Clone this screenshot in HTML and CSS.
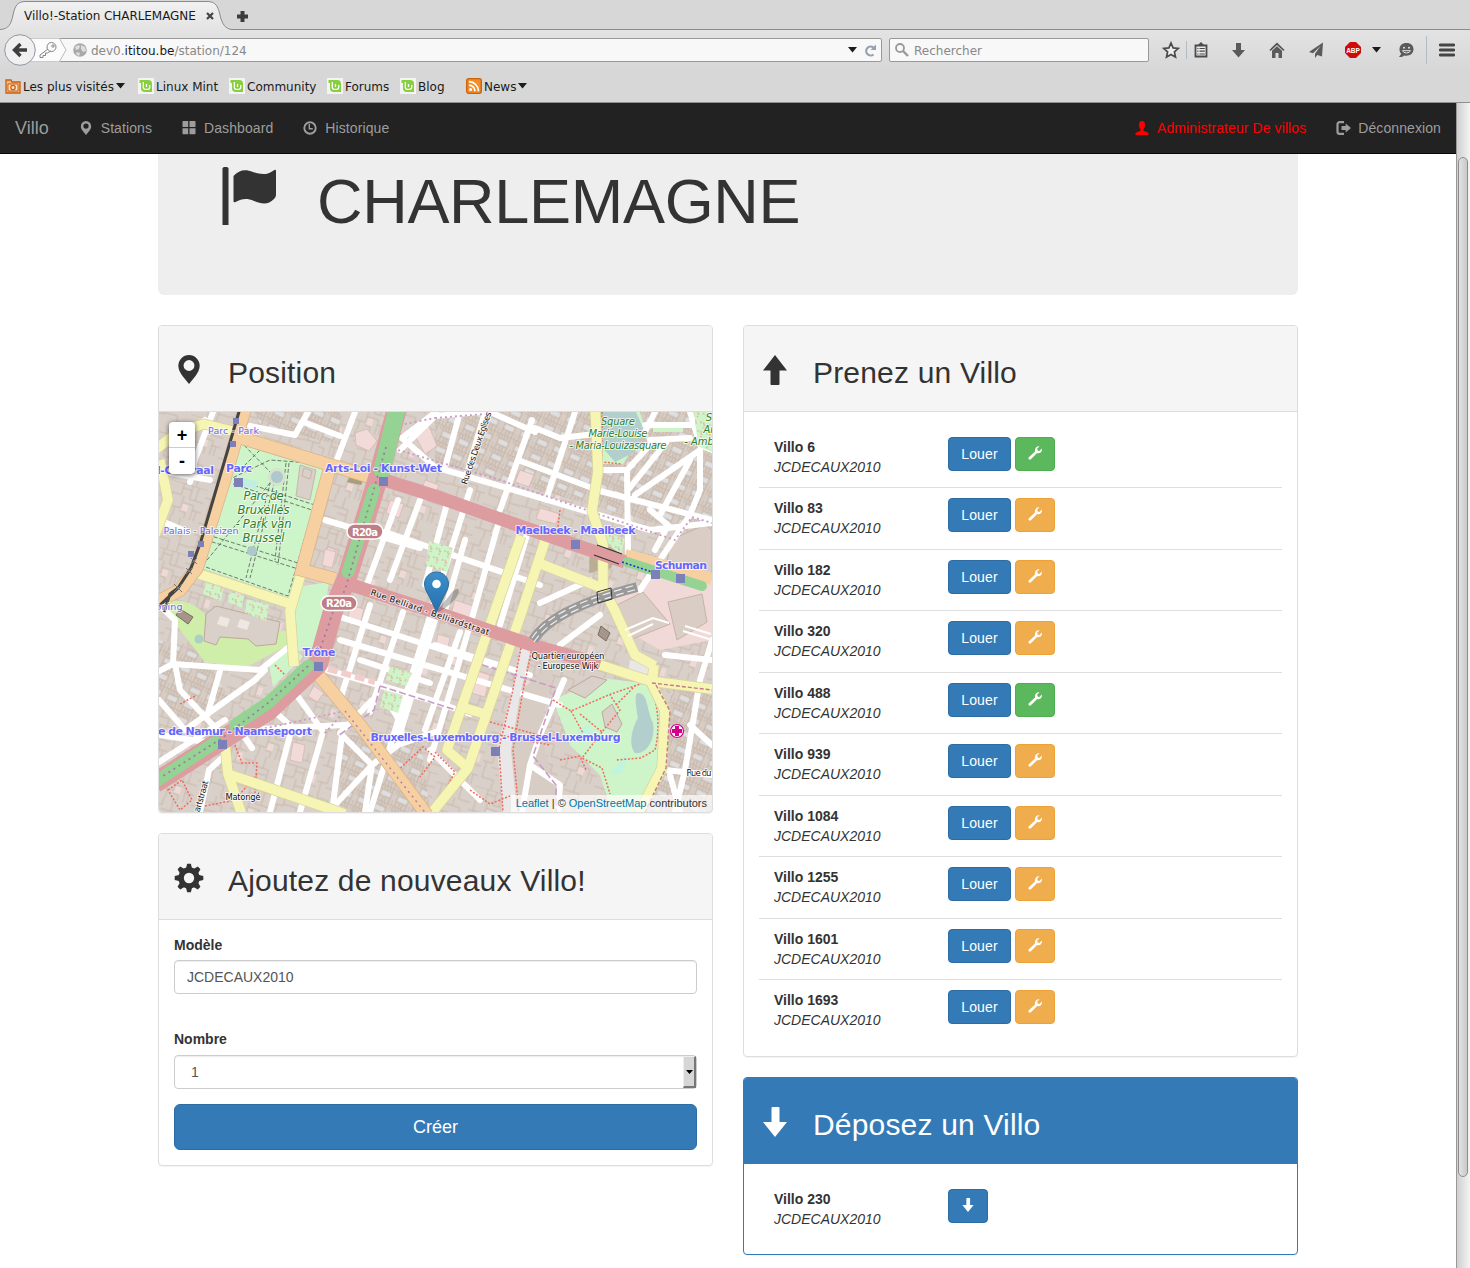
FILE: index.html
```html
<!DOCTYPE html>
<html lang="fr">
<head>
<meta charset="utf-8">
<title>Villo!-Station CHARLEMAGNE</title>
<link rel="stylesheet" href="styles.css">
</head>
<body>
<svg class="defs" width="0" height="0">
  <defs>
    <symbol id="pin" viewBox="0 0 16 16"><path fill-rule="evenodd" d="M8 0a5.900 5.900 0 0 0-5.900 5.900c0 2.200 1.200 4 2.200 5.500L8 16l3.700-4.600c1-1.500 2.200-3.300 2.200-5.500A5.900 5.900 0 0 0 8 0zm0 2.800a3 3 0 0 1 0 6 3 3 0 0 1 0-6z"/></symbol>
    <symbol id="grid" viewBox="0 0 14 14"><path d="M1 0h5.200v6H.5V.5zM7.500 0H13l.5.5V6h-6zM.5 7.300h5.700v6H1l-.5-.5zM7.500 7.300h6v5.500l-.5.5H7.500z"/></symbol>
    <symbol id="clock" viewBox="0 0 14 14"><circle cx="7" cy="7" r="5.700" fill="none" stroke="currentColor" stroke-width="1.900"/><path d="M6.300 3v4.700h3.500" fill="none" stroke="currentColor" stroke-width="1.400"/></symbol>
    <symbol id="user" viewBox="0 0 14 14"><path d="M7 0C4.900 0 4 1.500 4 3.500c0 2 .5 3.500 1.500 4.700v1.500C5 10.500 1 11 .5 12.300V14h13v-1.700C13 11 9 10.500 8.500 9.700V8.200C9.500 7 10 5.500 10 3.500 10 1.500 9.100 0 7 0z"/></symbol>
    <symbol id="logout" viewBox="0 0 15 14"><path d="M8 1.200H3.600A2.100 2.100 0 0 0 1.500 3.300v7.400a2.100 2.100 0 0 0 2.100 2.100H8" fill="none" stroke="currentColor" stroke-width="2.200"/><path d="M5.500 5h4.200V2.600L15 7l-5.300 4.400V9H5.500z"/></symbol>
    <symbol id="flag" viewBox="0 0 56 60"><path d="M.5 1L2 0h3L6.500 1v57h-6zM11.500 9C17 3 23 1.500 31 5c8 3 15 3 20.500-1.500q2.500-1.500 2.500.5v24q0 2-2 4c-6 6-12 5-20 2-7-3-12-2.500-18.500 1q-2 1-2-1z"/></symbol>
    <symbol id="up" viewBox="0 0 24 30"><path d="M12 0L24 15.500h-7.500V29q0 1-1 1h-7q-1 0-1-1V15.500H0z"/></symbol>
    <symbol id="down" viewBox="0 0 24 30"><path d="M12 30L24 15h-7.500V1q0-1-1-1h-6q-1 0-1 1v14H0z"/></symbol>
    <symbol id="gear" viewBox="-15 -15 30 30"><path id="tooth" d="M-3.200-9L-1.900-14.300H1.900L3.200-9V9L1.900 14.300H-1.900L-3.200 9z"/><use href="#tooth" transform="rotate(45)"/><use href="#tooth" transform="rotate(90)"/><use href="#tooth" transform="rotate(135)"/><circle r="10.700"/><circle r="5.200" fill="#f5f5f5"/></symbol>
    <symbol id="wrench" viewBox="0 0 14 14"><path d="M11.600.3L9.200 2.600l.4 1.900 1.900.4L13.700 2.600c.6 2-.3 3.500-1.500 4.200-.9.500-2 .5-3 .2l-6.300 6.300c-.6.6-1.400.6-2 0s-.6-1.400 0-2L7 5.600C6.500 2.700 8.500-.3 11.600.3z"/></symbol>
    <symbol id="mint" viewBox="0 0 16 16"><rect width="16" height="16" fill="#f4f4f4"/><path d="M1.500 2H10c3 0 4 1.500 4 4v8H7c-3 0-4-1.500-4-4V5H1.500z" fill="#87cf3e"/><path d="M5.300 4v5.500q0 1.800 1.800 1.800h2.800q1.800 0 1.800-1.800V7M8.500 6v3" fill="none" stroke="#fff" stroke-width="1.300"/></symbol>
    <symbol id="caret" viewBox="0 0 9 6"><path d="M0 0h9L4.500 5.500z"/></symbol>
  </defs>
</svg>

<header class="browser">
  <div class="tabs">
    <svg class="tab-shape" width="240" height="30" viewBox="0 0 240 30"><defs><linearGradient id="tg" x2="0" y2="1"><stop stop-color="#f1f1f1"/><stop offset="1" stop-color="#e3e3e3"/></linearGradient></defs><path d="M0 29.500C9 29 11 24 13 15S17 1.500 26 1.500H207c9 0 11 5 13 13.500s5 14 12 14.500h8V31H0z" fill="url(#tg)"/><path d="M0 29.500C9 29 11 24 13 15S17 1.500 26 1.500H207c9 0 11 5 13 13.500s5 14 12 14.500h8" fill="none" stroke="#8b8b8b"/></svg>
    <span class="tab-title">Villo!-Station CHARLEMAGNE</span>
    <svg class="tab-close" width="8" height="8" viewBox="0 0 8 8"><path d="M1 1l6 6M7 1L1 7" stroke="#444" stroke-width="2.200"/></svg>
    <svg class="tab-new" width="11" height="11" viewBox="0 0 11 11"><path d="M5.500 0v11M0 5.500h11" stroke="#3c3c3c" stroke-width="4"/></svg>
  </div>
  <div class="toolbar">
    <div class="url">
      <svg class="back" width="66" height="34" viewBox="0 0 66 34"><path d="M20 5.500H56L62.500 17 56 28.500H20z" fill="#fcfcfc"/><path d="M55.500 5.500L62 17l-6.500 11.500" fill="none" stroke="#bbb"/><circle cx="16" cy="17" r="15.300" fill="#f0f0f0" stroke="#8f98a3"/><path d="M16.500 11l-6 6 6 6M11 17h12" fill="none" stroke="#3e3e3e" stroke-width="3.400"/><g fill="none" stroke="#858585"><circle cx="47.500" cy="14" r="4.500"/><circle cx="49" cy="13" r="1.200"/><path d="M44 16l-8 6v2.500h3v-2h2.500v-2.500h2l3-2"/></g></svg>
      <svg width="14" height="14" viewBox="0 0 14 14"><circle cx="7" cy="7" r="6.800" fill="#a9a9a9"/><path d="M2 4l3-2 2 1-1 3-3 1zM8 2l4 2 1 4-3 1-2-3zM4 9l3 1-1 3-3-2z" fill="#dedede"/></svg>
      <span class="address">dev0.<b>ititou.be</b>/station/124</span>
      <svg class="ink" width="9" height="6"><use href="#caret"/></svg>
      <svg class="reload" width="13" height="13" viewBox="0 0 13 13"><path d="M9.500 10.500A4.500 4.500 0 1 1 9.500 3.500" fill="none" stroke="#95a1af" stroke-width="2.200"/><path d="M6.500 6H12V.5z" fill="#95a1af"/></svg>
    </div>
    <div class="search">
      <svg width="14" height="14" viewBox="0 0 14 14"><g fill="none" stroke="#999" stroke-width="1.800"><circle cx="5" cy="5" r="4"/><path d="M8 8l5 5" stroke-width="2.400"/></g></svg>
      <span>Rechercher</span>
    </div>
    <div class="tools">
      <svg width="18" height="18" viewBox="0 0 18 18"><path d="M9 2l2.100 4.900 5.200.5-3.900 3.500 1.100 5.200L9 13.400l-4.500 2.700 1.100-5.200-3.900-3.500 5.200-.5z" fill="#eee" stroke="#4a4a4a" stroke-width="1.700"/></svg>
      <i class="sep short"></i>
      <svg width="14" height="16" viewBox="0 0 14 16"><path d="M1.500 3.500h11v11h-11z" fill="#e8e8e8" stroke="#4a4a4a" stroke-width="1.800"/><path d="M4 3l3-3 3 3v1H4z" fill="#4a4a4a"/><path d="M3.300 6.500h1.200M5.500 6.500h5.300M3.300 9.200h1.200M5.500 9.200h5.300M3.300 12h1.200M5.500 12h5.300" stroke="#4a4a4a" stroke-width="1.200"/></svg>
      <svg width="13" height="15" viewBox="0 0 13 15"><path d="M4 0h5v7h4l-6.500 7.500L0 7h4z" fill="#5a5a5a"/></svg>
      <svg width="16" height="16" viewBox="0 0 16 16"><path d="M1 8.500L8 1.800l7 6.700" fill="none" stroke="#555" stroke-width="1.700"/><path d="M3 8.800l5-4.500 5 4.500V16H9.500v-5h-3v5H3z" fill="#5a5a5a"/></svg>
      <svg width="16" height="16" viewBox="0 0 16 16"><path d="M15 .5L1 10l4 1.300L12.500 4 7 11.800V16l2.300-3 4.700 1.500z" fill="#5a5a5a"/></svg>
      <svg width="16" height="16" viewBox="0 0 16 16"><path d="M5 0h6l5 5v6l-5 5H5l-5-5V5z" fill="#d00a0a"/><text x="8" y="10.800" class="abp">ABP</text></svg>
      <svg class="ink" width="9" height="6"><use href="#caret"/></svg>
      <svg width="16" height="16" viewBox="0 0 16 16"><path d="M8.500 1C4 1 1.500 3.600 1.500 7.200c0 2 .8 3.500 1.800 4.600L1 15c2 .3 4-.4 5-1.500 5.500 1 9.500-2 9.500-6.300C15.500 3.600 13 1 8.500 1z" fill="#5a5a5a"/><circle cx="6" cy="5.800" r="1" fill="#e5e5e5"/><circle cx="11" cy="5.800" r="1" fill="#e5e5e5"/><path d="M4.500 8.700h8q-1 2.300-4 2.300t-4-2.300z" fill="none" stroke="#e5e5e5"/></svg>
      <i class="sep"></i>
      <svg width="16" height="14" viewBox="0 0 16 14"><path d="M1.200 2h13.600M1.200 7h13.600M1.200 12h13.600" stroke="#444" stroke-width="2.800" stroke-linecap="round"/></svg>
    </div>
  </div>
  <div class="bookmarks">
    <span class="bm first"><svg width="16" height="16" viewBox="0 0 16 16"><path d="M1 2h5l1 2h8v11H1z" fill="#f3b87c" stroke="#cb5f10" stroke-width="1.300"/><path d="M3 6h10v7H3z" fill="#fbe3c5" stroke="#cb5f10"/><circle cx="8" cy="9.500" r="2.200" fill="none" stroke="#cb5f10" stroke-width="1.300"/></svg><span>Les plus visités</span><svg class="ink" width="9" height="6"><use href="#caret"/></svg></span>
    <span class="bm b2"><svg width="16" height="16"><use href="#mint"/></svg><span>Linux Mint</span></span>
    <span class="bm b3"><svg width="16" height="16"><use href="#mint"/></svg><span>Community</span></span>
    <span class="bm b4"><svg width="16" height="16"><use href="#mint"/></svg><span>Forums</span></span>
    <span class="bm b5"><svg width="16" height="16"><use href="#mint"/></svg><span>Blog</span></span>
    <span class="bm b6"><svg width="16" height="16" viewBox="0 0 16 16"><rect x=".7" y=".7" width="14.600" height="14.600" rx="2" fill="#f28c28" stroke="#c9600b" stroke-width="1.300"/><circle cx="4.600" cy="11.600" r="1.500" fill="#fff"/><path d="M3 7.200a6 6 0 0 1 6 6M3 3.700a9.500 9.500 0 0 1 9.500 9.500" fill="none" stroke="#fff" stroke-width="1.700"/></svg><span>News</span><svg class="ink" width="9" height="6"><use href="#caret"/></svg></span>
  </div>
</header>

<div class="viewport">
  <div class="page">
    <nav class="navbar">
      <a class="brand">Villo</a>
      <a class="nav n1"><svg width="14" height="14"><use href="#pin"/></svg>Stations</a>
      <a class="nav"><svg width="14" height="14"><use href="#grid"/></svg>Dashboard</a>
      <a class="nav"><svg width="14" height="14"><use href="#clock"/></svg>Historique</a>
      <a class="nav admin"><svg width="14" height="14"><use href="#user"/></svg>Administrateur De villos</a>
      <a class="nav"><svg width="15" height="14"><use href="#logout"/></svg>Déconnexion</a>
    </nav>
    <main class="container">
      <section class="jumbotron">
        <svg width="56" height="60"><use href="#flag"/></svg>
        <h1>CHARLEMAGNE</h1>
      </section>
      <div class="columns">
        <div class="col">
          <section class="panel">
            <h2><svg width="30" height="29"><use href="#pin"/></svg><span>Position</span></h2>
            <div class="map">
              <svg width="553" height="400" viewBox="159 412 553 400">
                <defs>
                  <pattern id="bld" width="76" height="68" patternUnits="userSpaceOnUse" patternTransform="rotate(17)">
                    <rect width="76" height="68" fill="#d9d0c9"/>
                    <path id="cells" d="M0 0h38M0 12h14v-12M14 5h9v9h15M23 0v5M29 14v-14M5 12v13h12v-13M11 25v9M17 19h12v15M29 24h9M0 25h5M33 24v10M17 28h6v6" fill="none" stroke="#c6b3a6" stroke-width=".8"/>
                    <use href="#cells" x="38" y="34"/><path d="M38 8h12v-8M50 6h14v12h12M44 8v18h16v-8M60 26h8v8M0 42h10v-8M10 46h16v14h12M4 42v16h12v10M26 60v8M20 34v12M16 52h10" fill="none" stroke="#c6b3a6" stroke-width=".8"/>
                    <path d="M18 20h6v7h-6zM68 37h5v8h-5z" fill="#eed9d6"/>
                  </pattern>
                  <pattern id="dense" width="18" height="16" patternUnits="userSpaceOnUse" patternTransform="rotate(24)">
                    <rect width="18" height="16" fill="#d7cdc5"/><rect x="4" y="5" width="11" height="6" fill="#dededf"/>
                    <path d="M0 0v5M3 0v5M6 0v4M9 0v5M12 0v4M15 0v5M0 11v5M4 11v5M8 12v4M11 11v5M15 11v5M0 0h18M4 5h11v6H4z" fill="none" stroke="#bfaa9b" stroke-width=".8"/>
                  </pattern>
                  <pattern id="garden" width="9" height="9" patternUnits="userSpaceOnUse" patternTransform="rotate(17)"><rect width="9" height="9" fill="#cdf5c9"/><path d="M1 1h5v5" fill="none" stroke="#f28478" stroke-width="1.200" stroke-dasharray="1.500 1.500"/></pattern>
                </defs>
                <rect x="159" y="412" width="553" height="400" fill="url(#bld)"/>
                <path d="M435 412H712V535L650 522 560 496 435 462z" fill="url(#dense)"/>
                <path d="M340 735H420L430 812H330zM255 412H340V445L260 425zM159 640L200 650 230 700 190 730 159 700zM672 690H712V812H650z" fill="url(#dense)"/>
                <path d="M510 700L555 660 540 730 560 812H500z" fill="#d7cdc5"/>
                <path d="M605 590L640 585 712 535V640L660 650 625 630z" fill="#f0d9d7"/>
                <path d="M670 540l35-15 7 5v45l-45-12zM615 606l28-14 27 32-40 16zM668 602l34-8 5 28-30 18z" fill="#d9cdc5" stroke="#c6b3a6"/>
                <g fill="#f2dad9" stroke="#d3b5ac" stroke-width=".7"><path d="M355 433l12-4 10 12-8 10-13-6zM413 432l16-6 8 20-12 8zM390 500l14 4-5 14-13-5zM325 549l11 3-4 16-10-3zM350 605l14 4-4 15-12-4zM425 480l14 5-5 12-13-5zM455 600l18 6-5 17-18-6zM520 470l14 5-5 12-14-5zM474 670l16 5-5 22-17-5zM293 742l12 3-3 18-12-3zM540 508l20 6-4 10-20-5zM438 634l12 4-3 14-12-4zM314 686l10 7-7 9-9-6z"/></g>
                <path d="M160 604C180 596 200 604 208 620L290 632 286 646 245 668 205 662 180 630z" fill="#cfeea9"/>
                <path d="M206 614l10-8 64 16-4 22-20 2-8-7-28-2-4 8-12-4z" fill="#d9d0c9" stroke="#bfa898"/><path d="M220 616l10 3-3 8-10-3zM240 619l10 3-3 8-10-3z" fill="#efe7e0"/>
                <circle cx="199" cy="639" r="4.500" fill="#acd0c4"/>
                <path d="M239 440L327 467 290 598 198 567z" fill="#cdf5c9"/>
                <path d="M291 588l38-6-10 65-30 6zM268 660l23-15 12 12-30 30z" fill="#cdf5c9"/>
                <g fill="none" stroke="#666" stroke-width=".9" stroke-dasharray="4 2"><path d="M240 441L325 467 288 596 200 565zM237 480L318 506M233 484L315 511M208 535L298 563M206 540L295 568M289 463L278 565M286 463L275 560M272 476L246 578M276 476L250 578M274 478L203 565M240 441L274 476M240 470l22-22-16-4M228 480L270 460 310 463"/></g>
                <path d="M300 465l16 5-6 30-14-4zM304 468l8 3-2 8-8-3z" fill="#d9d0c9" stroke="#bfa898" stroke-width=".7"/>
                <circle cx="277" cy="477" r="9" fill="#d4e2cf"/><circle cx="277" cy="477" r="6" fill="#aec8cb"/><circle cx="252" cy="551" r="5" fill="#aec8cb"/><path d="M243 478l15 4-2 7-14-3z" fill="#bfeee3"/>
                <path d="M206 583l18 4-3 14-18-7zM229 592l15 4-2 12-14-6zM247 599l22 6-3 16-21-8z" fill="url(#garden)"/>
                <path d="M600 412h40l5 18-22 34h-20z" fill="#cdf5c9"/><path d="M601 412h35l8 18-9 22-20 10-14-16z" fill="#b2cfcd"/><path d="M602 412v50l20 2" fill="none" stroke="#ef6d60" stroke-width="1.500" stroke-dasharray="2 1.500"/>
                <path d="M553 700L602 678 650 684 663 712 658 770 640 812H612L600 775 570 745z" fill="#cdf5c9"/>
                <path d="M638 693c10 0 8 15 15 30 3 20-9 32-18 30-7-8-3-25 3-35-2-12-4-25 0-25z" fill="#b2cfcd"/><path d="M628 752l-6 22-12 0zM577 730l10-4 7 6-10 8z" fill="#bff4df"/>
                <path d="M602 712l10-8 10 20-5 8-12-5zM568 690l24-14 15 4-22 18z" fill="#d9d0c9" stroke="#bfa898"/>
                <path d="M590 552l12-8 16 6-7 18-22 5z" fill="#aca17f" opacity=".7"/><path d="M351 475l14 2-4 8-14-3z" fill="#a99d7e"/>
                <g fill="none" stroke="#fff" stroke-linecap="round" stroke-linejoin="round" stroke-width="6">
                  <path d="M159 446L205 420M213 412L195 460 190 482M159 471L210 480M159 520L188 532M355 412L333 470M306 423L340 436M308 412L295 435 250 426"/>
                  <path d="M436 412L402 438M402 438L435 467 650 530 712 523M400 450L435 416M435 416L490 411M460 412L446 464M485 412L465 480M470 490L435 600 370 812M532 420L500 510M575 412L546 500M535 428L560 438 595 434M490 412L535 432M518 460L600 491 712 520M690 412L700 445 712 450M700 450L700 490 690 515 640 590M635 495L700 450M603 470L627 470 628 553M628 490L668 440M645 425L690 425M650 440L690 438M650 510L668 525 655 550M627 470L650 445M655 412L645 432M690 460L660 515"/>
                  <path d="M325 520L420 548M385 532L540 585M420 500L390 580M398 500L365 590M448 500L425 585M465 540L445 610M498 525L470 625M527 535L500 625"/>
                  <path d="M370 605L340 700M403 612L370 712M435 620L398 740M460 632L425 730M340 617L490 665M435 645L530 675M360 660L430 683M320 668L430 700 470 714M390 705L402 725 400 742"/>
                  <path d="M340 640L560 705M470 625L430 760"/>
                  <path d="M159 671L173 664 175 620 159 605M173 664L260 670 290 646M220 671L207 716M175 664L180 690 222 735M159 700L185 730 255 680 265 670M159 762L225 720M293 690L322 730M345 725L240 730 252 748M275 712L300 734M290 735L270 812M322 735L300 812M342 735L332 812M342 735L372 765 365 812M372 765L398 745 435 732M372 765L335 805M200 812L209 770 224 756M340 733L372 700"/>
                  <path d="M564 680L540 735 530 765 522 812M530 765L560 785 558 812M430 750L480 800M600 615L560 645M712 660L665 655M712 640L700 680 685 770 675 812M690 725L712 745M665 770L712 775M670 775L680 812M540 603L590 580M159 735L225 745"/>
                </g>
                <path d="M653 428h30v4h-30z" fill="#cdf5c9"/>
                <path d="M429 541l24 7-6 24-21-6zM390 666l22 7-6 13-20-6zM384 690l19 6-5 17-18-6zM604 532l21 7-4 15-12-8zM694 412h18v40l-14-6z" fill="url(#garden)"/>
                <path d="M522 645l10 0-12 50-9 55 6 62h-14l-6-64 14-52z" fill="#e9e7e8"/>
                <path d="M630 660l22 5-4 14-20-6z" fill="#e9e7e8"/>
                <g fill="none" stroke="#f26a5c" stroke-width="1.500" stroke-dasharray="2 1.700"><path d="M553 700l18 11 40-17 35-12M580 714l22 18 18-22-10-15M655 700q6 25 0 50l-14 8-25 2M602 732l-20 26 20 10 8 26M616 705l20-20M571 711l12 22M521 648l-9 46-13 54 4 64M532 648l-10 48-9 54 6 62M490 722l60 16M500 735l50 10M232 738l10 25 15 0-2 30M168 790l14-10 10 20-12 10zM205 806l30-6 22-26M395 773l28-26 12 10-15 20M435 752l20 20-12 22M560 760l20-4 6 14M470 790l20 14 20-8M180 704l15-8M560 510l-3 24M275 665l10 10"/></g>
                <g fill="none" stroke="#c99bc9" stroke-width="1.800" stroke-dasharray="2 3"><path d="M398 450L500 480 595 513 675 540 692 517 712 523M435 418L485 414M345 711L225 737M325 733L345 711M398 440L400 425 435 418"/></g>
                <g fill="none" stroke="#c99bc9" stroke-width="1.600" stroke-dasharray="7 3"><path d="M380 686L459 711 476 663 556 688 533 756 556 785 556 812M380 686L374 710 338 736"/></g>
                <g fill="none" stroke-linejoin="round" stroke="#d8d59b" stroke-width="11"><path d="M595 405L598 471 592 511 603 544 603 588 615 611 635 655 655 666"/><path d="M521 536L490 625 447 750 468 768M545 541L522 611 468 768 430 815M541 564L602 588M465 708L488 715"/><path d="M196 573L291 604M301 574L290 611 294 666M225 744L228 774 243 818M228 774L345 814"/><path d="M600 665L650 681 712 689M654 665L652 684 665 711 662 768 638 815M155 450L178 432 204 424 232 431M160 460L168 500 155 535"/></g>
                <g fill="none" stroke-linejoin="round" stroke="#f6f5b4" stroke-width="9.500"><path d="M595 405L598 471 592 511 603 544 603 588 615 611 635 655 655 666"/><path d="M521 536L490 625 447 750 468 768M545 541L522 611 468 768 430 815M541 564L602 588M465 708L488 715"/><path d="M196 573L291 604M301 574L290 611 294 666M225 744L228 774 243 818M228 774L345 814"/><path d="M600 665L650 681 712 689M654 665L652 684 665 711 662 768 638 815M155 450L178 432 204 424 232 431M160 460L168 500 155 535"/></g>
                <path d="M656 685L670 711 666 768 645 812M652 683L712 690" fill="none" stroke="#c5798b" stroke-width="1.400" stroke-dasharray="4 2"/>
                <g fill="none" stroke="#d9b489" stroke-width="13.500"><path d="M246 405L223 485 197 568 180 590 155 603M238 437L370 477M329 471L302 570 335 579M316 672L360 725 427 815"/></g>
                <g fill="none" stroke="#f7d0a2" stroke-width="12"><path d="M246 405L223 485 197 568 180 590 155 603M238 437L370 477M329 471L302 570 335 579M316 672L360 725 427 815M625 555L712 579"/></g>
                <path d="M345 711L427 815" fill="none" stroke="#b27fae" stroke-width="1.500" stroke-dasharray="2 4"/>
                <g fill="none" stroke="#dd9c9f" stroke-linejoin="round"><path d="M398 405L378 478 347 578 333 611 318 664 268 711 225 738 155 783" stroke-width="20"/><path d="M378 478L435 496 520 526 625 562M336 580L435 612 535 646 600 664" stroke-width="13"/></g>
                <g fill="none" stroke="#95d395" stroke-linecap="round"><path d="M398 405L382 470" stroke-width="17"/><path d="M374 490L348 572M308 666L268 703 235 725M216 742L155 782" stroke-width="12.500"/><path d="M627 562L702 586" stroke-width="10"/></g>
                <path d="M386 447L345 590 333 612 318 655M308 666L268 703 222 738 160 778" fill="none" stroke="#a573a8" stroke-width="1.700" stroke-dasharray="2 4"/>
                <path d="M622 562L655 573" stroke="#2038c0" stroke-width="1.600" stroke-dasharray="2 2"/><path d="M597 545l25 9M594 555l25 9" stroke="#333" stroke-width="1.200"/>
                <path d="M328 669L375 682" stroke="#f2cdcb" stroke-width="6" stroke-dasharray="10 4"/>
                <g fill="none"><path d="M533 640C545 622 570 605 637 587" stroke="#999" stroke-width="10"/><path d="M533 640C545 622 570 605 637 587" stroke="#eee" stroke-width="1.200" stroke-dasharray="8 4" transform="translate(1 2)"/><path d="M533 640C545 622 570 605 637 587" stroke="#eee" stroke-width="1.200" stroke-dasharray="8 4" transform="translate(-1 -2)"/><path d="M597 592l14-4 1 11-14 4z" stroke="#333"/></g>
                <path d="M241 405L201 541 191 568 178 588 155 610M178 588l-8 6-6 18" fill="none" stroke="#444" stroke-width="3"/><path d="M191 558l6 6m0-6l-6 6M186 568l6 6m0-6l-6 6M174 584l8 8m0-8l-8 8" stroke="#777"/>
                <path d="M180 609l13 8-5 7-12-9zM601 626l9 7-4 8-8-6z" fill="#a5958a" stroke="#7a6a60"/>
                <path d="M625 630l28-12 16 5M628 636l25-12M685 626l26 8M683 631l26 8" fill="none" stroke="#fff" stroke-width="2"/>
                <g fill="#7b80b8"><path d="M233 418h6v6h-6zM230 441h6v6h-6zM234 478h9v9h-9zM198 541h6v6h-6zM188 551h6v6h-6zM379 477h9v9h-9zM571 540h9v9h-9zM651 570h9v9h-9zM676 574h9v9h-9zM314 662h9v9h-9zM218 740h9v9h-9zM491 747h9v9h-9z"/></g>
                <circle cx="677" cy="731" r="6.500" fill="#fff" stroke="#d5008c" stroke-width="1.200"/><path d="M677 726v10M672 731h10" stroke="#d5008c" stroke-width="4"/>
                <g class="rail"><text x="233.500" y="434" textLength="51">Parc - Park</text><text x="201" y="534" textLength="75">Palais - Paleizen</text><text x="169" y="610" textLength="27">oning</text></g>
                <g class="metro"><text x="185.500" y="474" textLength="57">l-Centraal</text><text x="239" y="472" textLength="26">Parc</text><text x="383.500" y="472" textLength="117">Arts-Loi - Kunst-Wet</text><text x="575.500" y="534" textLength="120">Maelbeek - Maalbeek</text><text x="681" y="569" textLength="52">Schuman</text><text x="319" y="656" textLength="33">Trône</text><text x="235" y="735" textLength="154">e de Namur - Naamsepoort</text><text x="495.500" y="741" textLength="250">Bruxelles-Luxembourg - Brussel-Luxemburg</text></g>
                <g class="park"><text x="263.500" y="500" textLength="40">Parc de</text><text x="263.500" y="514" textLength="52">Bruxelles</text><text x="263.500" y="528" textLength="56">- Park van</text><text x="263.500" y="542" textLength="42">Brussel</text></g>
                <g class="park small"><text x="618" y="425" textLength="34">Square</text><text x="618" y="437" textLength="59">Marie-Louise</text><text x="618" y="449" textLength="97">- Maria-Louizasquare</text><text x="709" y="421">S</text><text x="709" y="433">Ar</text><text x="699" y="445">- Amb</text></g>
                <g class="street"><text transform="translate(479 449) rotate(-71)" textLength="76">Rue des Deux Eglises</text><text transform="translate(429 615) rotate(19)" textLength="125">Rue Belliard - Belliardstraat</text><text x="568" y="659" textLength="73">Quartier européen</text><text x="568" y="669" textLength="61">- Europese Wijk</text><text x="243" y="800" textLength="35">Matongé</text><text x="699" y="776" textLength="25">Rue du</text><text transform="translate(204 797) rotate(-74)" textLength="32">artstraat</text></g>
                <g class="ref"><rect x="347" y="524" width="36" height="15" rx="7.500"/><text x="365" y="536" textLength="26">R20a</text><rect x="321" y="596" width="36" height="14.500" rx="7.500"/><text x="339" y="607" textLength="26">R20a</text></g>
                <path d="M437 611l16-20q8-6 5 4-4 8-19 17z" opacity=".3"/>
                <linearGradient id="mk" x2="0" y2="1"><stop stop-color="#3e8fc9"/><stop offset="1" stop-color="#2370ad"/></linearGradient>
                <path d="M436.500 572c-7 0-12 5.500-12 12 0 5 3 9 5 13l7 15 7-15c2-4 5-8 5-13 0-6.500-5-12-12-12z" fill="url(#mk)" stroke="#2b6ea3"/><circle cx="436.500" cy="584" r="4.300" fill="#fff"/>
              </svg>
              <div class="zoom"><span>+</span><span>-</span></div>
              <div class="credit"><a>Leaflet</a> | © <a>OpenStreetMap</a> contributors</div>
            </div>
          </section>
          <section class="panel">
            <h2><svg width="30" height="30" class="gear"><use href="#gear"/></svg><span>Ajoutez de nouveaux Villo!</span></h2>
            <form class="form">
              <label>Modèle</label>
              <div class="field">JCDECAUX2010</div>
              <label class="second">Nombre</label>
              <div class="field select"><span>1</span><i><svg width="7" height="4" viewBox="0 0 9 6" preserveAspectRatio="none"><path d="M0 0h9L4.500 6z"/></svg></i></div>
              <button type="button" class="create">Créer</button>
            </form>
          </section>
        </div>
        <div class="col">
          <section class="panel">
            <h2><svg width="24" height="30" class="arrow"><use href="#up"/></svg><span>Prenez un Villo</span></h2>
            <ul class="rows">
              <li><p><b>Villo 6</b><em>JCDECAUX2010</em></p><a class="btn">Louer</a><a class="btn ok"><svg width="14" height="14"><use href="#wrench"/></svg></a></li>
              <li><p><b>Villo 83</b><em>JCDECAUX2010</em></p><a class="btn">Louer</a><a class="btn warn"><svg width="14" height="14"><use href="#wrench"/></svg></a></li>
              <li><p><b>Villo 182</b><em>JCDECAUX2010</em></p><a class="btn">Louer</a><a class="btn warn"><svg width="14" height="14"><use href="#wrench"/></svg></a></li>
              <li><p><b>Villo 320</b><em>JCDECAUX2010</em></p><a class="btn">Louer</a><a class="btn warn"><svg width="14" height="14"><use href="#wrench"/></svg></a></li>
              <li><p><b>Villo 488</b><em>JCDECAUX2010</em></p><a class="btn">Louer</a><a class="btn ok"><svg width="14" height="14"><use href="#wrench"/></svg></a></li>
              <li><p><b>Villo 939</b><em>JCDECAUX2010</em></p><a class="btn">Louer</a><a class="btn warn"><svg width="14" height="14"><use href="#wrench"/></svg></a></li>
              <li><p><b>Villo 1084</b><em>JCDECAUX2010</em></p><a class="btn">Louer</a><a class="btn warn"><svg width="14" height="14"><use href="#wrench"/></svg></a></li>
              <li><p><b>Villo 1255</b><em>JCDECAUX2010</em></p><a class="btn">Louer</a><a class="btn warn"><svg width="14" height="14"><use href="#wrench"/></svg></a></li>
              <li><p><b>Villo 1601</b><em>JCDECAUX2010</em></p><a class="btn">Louer</a><a class="btn warn"><svg width="14" height="14"><use href="#wrench"/></svg></a></li>
              <li><p><b>Villo 1693</b><em>JCDECAUX2010</em></p><a class="btn">Louer</a><a class="btn warn"><svg width="14" height="14"><use href="#wrench"/></svg></a></li>
            </ul>
          </section>
          <section class="panel primary">
            <h2><svg width="24" height="30" class="arrow"><use href="#down"/></svg><span>Déposez un Villo</span></h2>
            <ul class="rows">
              <li><p><b>Villo 230</b><em>JCDECAUX2010</em></p><a class="btn drop"><svg width="14" height="14"><use href="#down"/></svg></a></li>
            </ul>
          </section>
        </div>
      </div>
    </main>
  </div>
  <div class="scrollbar"><div class="thumb"></div></div>
</div>
</body>
</html>
```

FILE: styles.css
```css
* { box-sizing: border-box; }
body { margin: 0; height: 1268px; overflow: hidden; display: flex; flex-direction: column; background: #fff; color: #333; font: 14px/20px "Liberation Sans", Arial, sans-serif; }
svg { fill: currentColor; flex: none; display: block; }
.defs { position: absolute; }
.ink { color: #1c1c1c; }

/* Browser chrome */
.browser { height: 103px; flex: none; display: flex; flex-direction: column; background: #d7d7d7; border-bottom: 1px solid #8f8f8f; color: #1a1a1a; font: 12px/16px "DejaVu Sans", sans-serif; }
.tabs { height: 30px; display: flex; align-items: center; border-bottom: 1px solid #8b8b8b; position: relative; }
.tab-shape { position: absolute; left: 0; top: 0; }
.tab-title { position: relative; margin-left: 24px; width: 172px; white-space: nowrap; padding-top: 2px; letter-spacing: -.06px; }
.tab-close { position: relative; margin: 3px 0 0 10px; }
.tab-new { margin: 3px 0 0 23px; }
.toolbar { height: 40px; display: flex; align-items: center; background: linear-gradient(#e3e3e3, #d7d7d7); }
.url { margin-left: 20px; width: 862px; height: 24px; border: 1px solid #999; border-radius: 2px; background: #f8f8f8; display: flex; align-items: center; color: #888; }
.back { margin: 0 3px 0 -17px; }
.address { flex: 1; padding: 1px 0 0 4px; }
.address b { font-weight: normal; color: #1a1a1a; }
.url > .ink { margin-right: -2px; }
.reload { margin: 0 4px 0 9px; }
.search { margin-left: 7px; width: 260px; height: 24px; border: 1px solid #999; border-radius: 2px; background: #f8f8f8; display: flex; align-items: center; gap: 5px; padding-left: 5px; color: #888; }
.search span { padding-top: 1px; }
.tools { margin-left: 6px; display: grid; grid-template-columns: 31px 1px 28px 47px 30px 47px 28px 19px 39px 2px 40px; align-items: center; justify-items: center; }
.sep { width: 1px; height: 28px; background: #b4bbc3; }
.sep.short { height: 18px; }
.abp { font: bold 6.5px "Liberation Sans", sans-serif; fill: #fff; text-anchor: middle; }
.bookmarks { display: flex; align-items: center; height: 32px; }
.bm { display: flex; align-items: center; gap: 2px; white-space: nowrap; flex: none; }
.bm span { padding-top: 1px; }
.first { margin-left: 5px; width: 133px; }
.b2 { width: 91px; }
.b3 { width: 98px; }
.b4 { width: 73px; }
.b5 { width: 66px; }

/* Page */
.viewport { flex: 1; min-height: 0; display: flex; }
.page { flex: 1; overflow: hidden; }
.navbar { height: 51px; background: #222; border-bottom: 1px solid #080808; display: flex; align-items: center; color: #9d9d9d; padding: 0 15px; }
.brand { font-size: 18px; margin-right: 30px; }
.nav { display: flex; align-items: center; gap: 8px; margin-right: 30px; letter-spacing: .09px; }
.nav:last-child { margin-right: 0; gap: 7px; }
.admin { margin-left: auto; color: #f00; }
.container { width: 1140px; margin: 0 auto; }
.jumbotron { height: 141px; background: #eee; border-radius: 0 0 6px 6px; padding: 13px 60px 0 64px; display: flex; }
h1 { margin: 0 0 0 39px; font-size: 63px; line-height: 69px; font-weight: normal; letter-spacing: -.3px; }
.columns { margin-top: 30px; display: grid; grid-template-columns: 555px 555px; gap: 30px; align-items: start; }
.col { display: flex; flex-direction: column; gap: 20px; }
.panel { border: 1px solid #ddd; border-radius: 4px; box-shadow: 0 1px 1px rgba(0,0,0,.05); overflow: hidden; }
h2 { margin: 0; height: 86px; padding: 9px 15px 0; background: #f5f5f5; border-bottom: 1px solid #ddd; font-size: 30px; font-weight: normal; line-height: 33px; letter-spacing: .18px; display: flex; align-items: center; gap: 24px; }
h2 span { margin-top: -1px; }
h2 svg { margin-top: -7px; }
h2 .arrow { margin: -7px 2px 0 4px; }
.primary { border-color: #337ab7; }
.primary h2 { background: #337ab7; border-color: #337ab7; color: #fff; }

.map { position: relative; height: 400px; }
.map text { text-anchor: middle; font-family: "DejaVu Sans", sans-serif; paint-order: stroke; stroke: rgba(255,255,255,.7); stroke-width: 2px; stroke-linejoin: round; }
.map .rail { font-size: 9.5px; fill: #6666ee; }
.map .metro { font-size: 11px; font-weight: bold; fill: #6666ff; }
.map .park { font-size: 11.5px; font-style: italic; fill: #2f8028; stroke-width: 1px; }
.map .small { font-size: 10px; }
.map .street { font-size: 8.5px; fill: #111; stroke-width: 1px; }
.map .ref rect { fill: #bf7d84; stroke: #fff; stroke-width: 1.5px; }
.map .ref { font-size: 10px; font-weight: bold; fill: #fff; }
.map .ref text { stroke: none; }
.zoom { position: absolute; left: 10px; top: 10px; width: 26px; border-radius: 4px; background: #fff; box-shadow: 0 1px 5px rgba(0,0,0,.65); color: #000; text-align: center; font-weight: bold; font-size: 18px; line-height: 26px; }
.zoom span { display: block; height: 26px; }
.zoom span:first-child { border-bottom: 1px solid #ccc; }
.credit { position: absolute; right: 0; bottom: 0; padding: 0 5px; background: rgba(255,255,255,.7); font-size: 11px; line-height: 17px; }
.credit a { color: #0078a8; }

.form { display: flex; flex-direction: column; padding: 15px; }
label { font-weight: bold; margin-bottom: 5px; }
.second { margin-top: 35px; margin-bottom: 6px; }
.field { height: 34px; border: 1px solid #ccc; border-radius: 4px; padding: 0 12px; line-height: 32px; color: #555; box-shadow: inset 0 1px 1px rgba(0,0,0,.075); }
.select { display: flex; justify-content: space-between; padding: 0 0 0 16px; }
.select i { width: 13px; background: #d6d6d6; border: 1px solid #eee; border-right: 2px solid #777; border-bottom: 2px solid #777; display: flex; align-items: center; justify-content: center; color: #000; }
.create { margin-top: 15px; height: 46px; border: 1px solid #2e6da4; border-radius: 6px; background: #337ab7; color: #fff; font: 18px "Liberation Sans", Arial, sans-serif; }

.rows { list-style: none; margin: 0; padding: 15px 15px 15.5px; }
.primary .rows { padding-bottom: 15px; }
.rows li { display: flex; align-items: flex-start; gap: 4px; height: 61.5px; border-top: 1px solid #ddd; padding: 10px 15px 0; }
.rows li:first-child { border-top: 0; height: 60px; }
.rows p { margin: 0; width: 170px; display: flex; flex-direction: column; }
.btn { width: 63px; height: 34px; border: 1px solid #2e6da4; border-radius: 4px; background: #337ab7; color: #fff; display: flex; align-items: center; justify-content: center; letter-spacing: .15px; }
.ok, .warn, .drop { width: 40px; }
.ok { background: #5cb85c; border-color: #4cae4c; }
.warn { background: #f0ad4e; border-color: #eea236; }
.btn svg { margin-bottom: 2px; }

.scrollbar { width: 14px; flex: none; background: linear-gradient(90deg, #cfcfcf, #f4f4f4); border-left: 1px solid #999; padding: 54px 1px 0; }
.thumb { height: 1020px; border: 1px solid #8e8e8e; border-radius: 5px; background: linear-gradient(90deg, #e2e2e2, #c9c9c9); width: 10px; }
```
